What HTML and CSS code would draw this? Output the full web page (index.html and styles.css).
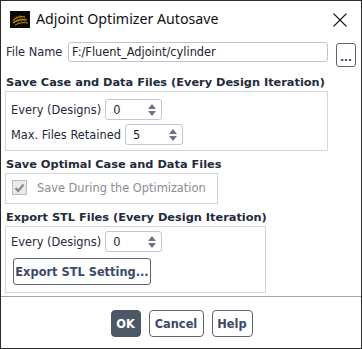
FILE: index.html
```html
<!DOCTYPE html>
<html>
<head>
<meta charset="utf-8">
<link rel="stylesheet" href="styles.css">
</head>
<body>
<div class="window">
  <div class="titlebar">
    <svg class="appicon" width="20" height="17" viewBox="0 0 20 17">
      <rect x="0" y="0" width="20" height="17" fill="#0b0905"/>
      <path d="M3 10 C6 6 10 5 15 6" stroke="#b8860b" stroke-width="1.2" fill="none"/>
      <path d="M3 12 C7 9 11 8 17 9" stroke="#e0a020" stroke-width="1.2" fill="none"/>
      <path d="M5 14 C9 12 13 11 18 12" stroke="#c98a10" stroke-width="1" fill="none"/>
      <path d="M6 5 L9 13 M10 4 L12 12 M14 5 L15 11" stroke="#8a6508" stroke-width="0.8" fill="none"/>
    </svg>
    <span class="title">Adjoint Optimizer Autosave</span>
    <svg class="close" width="14" height="14" viewBox="0 0 14 14">
      <path d="M0.5 0.5 L13.5 13.5 M13.5 0.5 L0.5 13.5" stroke="#1a1a1a" stroke-width="1.1"/>
    </svg>
  </div>
  <div class="content">
    <div class="filerow">
      <span class="lbl">File Name</span>
      <div class="textfield">F:/Fluent_Adjoint/cylinder</div>
      <div class="browse">...</div>
    </div>

    <div class="heading h1">Save Case and Data Files (Every Design Iteration)</div>
    <div class="group g1">
      <div class="row">
        <span class="lbl">Every (Designs)</span>
        <div class="spin"><span class="val">0</span><span class="arrows"><i class="up"></i><i class="down"></i></span></div>
      </div>
      <div class="row r2">
        <span class="lbl">Max. Files Retained</span>
        <div class="spin"><span class="val">5</span><span class="arrows"><i class="up"></i><i class="down"></i></span></div>
      </div>
    </div>

    <div class="heading">Save Optimal Case and Data Files</div>
    <div class="group g2">
      <div class="check">
        <span class="box"><svg width="11" height="10" viewBox="0 0 11 10"><path d="M1.5 5 L4.2 8 L9.5 1.5" stroke="#8c8c8c" stroke-width="2.2" fill="none"/></svg></span>
        <span class="checklbl">Save During the Optimization</span>
      </div>
    </div>

    <div class="heading">Export STL Files (Every Design Iteration)</div>
    <div class="group g3">
      <div class="row">
        <span class="lbl">Every (Designs)</span>
        <div class="spin"><span class="val">0</span><span class="arrows"><i class="up"></i><i class="down"></i></span></div>
      </div>
      <div class="btn stl">Export STL Setting...</div>
    </div>
  </div>
  <div class="sep"></div>
  <div class="actions">
    <div class="btn ok">OK</div>
    <div class="btn">Cancel</div>
    <div class="btn">Help</div>
  </div>
</div>
</body>
</html>
```

FILE: styles.css
```css
* { box-sizing: border-box; }
body {
  margin: 0;
  background: #ffffff;
  font-family: "DejaVu Sans", Verdana, sans-serif;
  font-size: 11.4px;
  color: #262a3a;
}
.window {
  width: 362px;
  height: 349px;
  border: 1px solid #2b2b2b;
  background: #ffffff;
  display: flex;
  flex-direction: column;
}
.titlebar {
  height: 35px;
  display: flex;
  align-items: center;
  padding-left: 9px;
  padding-right: 14px;
}
.appicon { flex: none; margin-top: 1px; }
.title {
  font-family: "Noto Sans", "Open Sans", sans-serif;
  font-size: 14.2px;
  color: #111;
  margin-left: 6px;
  flex: 1;
}
.close { flex: none; margin-top: 2px; }
.content {
  padding: 0 0 0 4px;
  display: flex;
  flex-direction: column;
  align-items: flex-start;
}
.filerow {
  margin-top: 6px;
  display: flex;
  align-items: flex-start;
  height: 25px;
}
.filerow .lbl {
  margin-left: 1px;
  line-height: 20px;
  width: 62px;
}
.textfield {
  width: 260px;
  height: 20px;
  border: 1px solid #bfc3cc;
  border-radius: 3px;
  padding-left: 3px;
  line-height: 18px;
  color: #1e2230;
}
.browse {
  margin-left: 8px;
  margin-top: 1px;
  width: 20px;
  height: 24px;
  border: 1px solid #5d6473;
  border-radius: 3px;
  font-weight: bold;
  font-size: 10px;
  text-align: center;
  line-height: 28px;
  color: #2e3548;
}
.heading {
  font-weight: bold;
  font-size: 11.35px;
  line-height: 15px;
  height: 15px;
  color: #232b3c;
  margin-top: 6px;
  margin-left: 1px;
  white-space: nowrap;
}
.heading.h1 { margin-top: 8px; }
.group {
  margin-top: 1px;
  border: 1px solid #d2d5de;
}
.g1 { width: 323px; height: 60px; padding: 7px 0 0 5px; }
.g2 { width: 213px; height: 31px; padding: 6px 0 0 6px; }
.g3 { width: 261px; height: 67px; padding: 4px 0 0 5px; }
.row {
  display: flex;
  align-items: center;
  height: 21px;
}
.row.r2 { margin-top: 4px; }
.row .lbl { margin-right: 4px; white-space: nowrap; }
.spin {
  width: 57px;
  height: 21px;
  border: 1px solid #c3c7d0;
  border-radius: 3px;
  display: flex;
  align-items: center;
  justify-content: space-between;
  padding: 0 5px 0 7px;
}
.g1 .r2 .spin { width: 58px; }
.val { color: #1e2230; }
.arrows {
  display: flex;
  flex-direction: column;
  gap: 2px;
}
.arrows i {
  display: block;
  width: 0;
  height: 0;
  border-left: 4.5px solid transparent;
  border-right: 4.5px solid transparent;
}
.arrows .up { border-bottom: 5px solid #6e7480; }
.arrows .down { border-top: 5px solid #6e7480; }
.check {
  display: flex;
  align-items: center;
}
.check .box {
  width: 15px;
  height: 15px;
  border: 1px solid #bdbdbd;
  background: #eaeaea;
  display: flex;
  align-items: center;
  justify-content: center;
}
.checklbl {
  margin-left: 10px;
  color: #8a8d95;
}
.btn {
  display: flex;
  align-items: center;
  justify-content: center;
  height: 27px;
  border: 1px solid #5e6574;
  border-radius: 4px;
  font-weight: bold;
  color: #3b4a68;
  padding: 0 4px;
  white-space: nowrap;
}
.btn.stl {
  margin-top: 6px;
  margin-left: 2px;
  width: 138px;
  border-radius: 3px;
}
.sep {
  margin-top: 3px;
  height: 1px;
  background: #a7a7a7;
}
.actions {
  margin-top: 13px;
  display: flex;
  justify-content: center;
  gap: 8px;
  padding-left: 1px;
}
.actions .ok {
  background: #4d5867;
  border-color: #4d5867;
  color: #ffffff;
  width: 30px;
}
.actions .btn:nth-child(2) { width: 55px; }
.actions .btn:nth-child(3) { width: 41px; }
```
